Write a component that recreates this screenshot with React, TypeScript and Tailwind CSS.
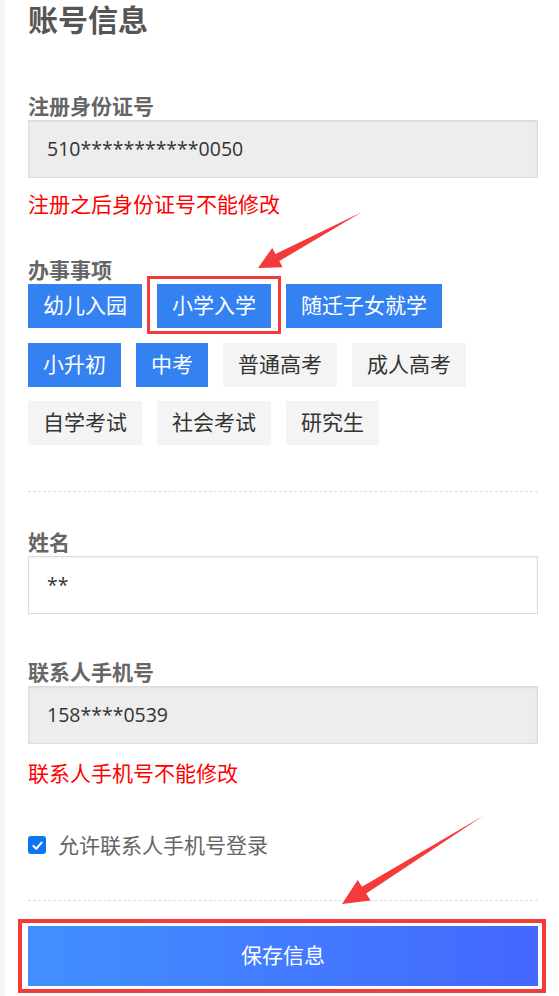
import React from "react";

const FONT = { fontFamily: '"Open Sans", "Noto Sans CJK SC", sans-serif' };

type Chip = { t: string; on: boolean; mark?: boolean };

const rows: Chip[] = [
  { t: "幼儿入园", on: true },
  { t: "小学入学", on: true, mark: true },
  { t: "随迁子女就学", on: true },
  { t: "小升初", on: true },
  { t: "中考", on: true },
  { t: "普通高考", on: false },
  { t: "成人高考", on: false },
  { t: "自学考试", on: false },
  { t: "社会考试", on: false },
  { t: "研究生", on: false },
];

function Label({ children }: { children: React.ReactNode }) {
  return <div className="text-[21px] leading-[28px] font-bold text-[#666]">{children}</div>;
}

export default function App() {
  return (
    <div className="relative w-[559px] h-[996px] overflow-hidden bg-[#f5f6fa]" style={FONT}>
      <div className="ml-[5px] h-full bg-white pl-[23px] pr-[21px]">
        <h1 className="h-[40px] text-[30px] leading-[40px] font-bold text-[#555]">账号信息</h1>

        <div className="mt-[52px]">
          <Label>注册身份证号</Label>
        </div>
        <div className="h-[58px] border border-[#dcdcdc] bg-[#ededed] shadow-[inset_0_1px_2px_rgba(0,0,0,0.08)] pl-[18px] flex items-center text-[19.5px] text-[#333]">
          510***********0050
        </div>
        <p className="mt-[12px] text-[21px] leading-[28px] text-[#ff0000]">注册之后身份证号不能修改</p>

        <div className="mt-[38px]">
          <Label>办事事项</Label>
        </div>
        <div className="flex flex-wrap gap-x-[15px] gap-y-[14.5px]">
          {rows.map((c) => (
            <div
              key={c.t}
              className={
                "relative h-[44px] px-[15px] flex items-center text-[21px] " +
                (c.on ? "bg-[#3481f2] text-white" : "bg-[#f4f4f4] text-[#333]")
              }
            >
              {c.t}
              {c.mark && (
                <span className="absolute left-[-10px] right-[-10px] top-[-8px] bottom-[-6px] border-[3px] border-[#f43a3a]" />
              )}
            </div>
          ))}
        </div>

        <div className="mt-[45.5px] border-t border-dashed border-[#dddddd]" />

        <div className="mt-[36.5px]">
          <Label>姓名</Label>
        </div>
        <div className="h-[58px] border border-[#dcdcdc] bg-white shadow-[inset_0_1px_2px_rgba(0,0,0,0.06)] pl-[18px] flex items-center text-[19.5px] text-[#333]">
          **
        </div>

        <div className="mt-[44px]">
          <Label>联系人手机号</Label>
        </div>
        <div className="h-[58px] border border-[#dcdcdc] bg-[#ededed] shadow-[inset_0_1px_2px_rgba(0,0,0,0.08)] pl-[18px] flex items-center text-[19.5px] text-[#333]">
          158****0539
        </div>
        <p className="mt-[15px] text-[21px] leading-[28px] text-[#ff0000]">联系人手机号不能修改</p>

        <div className="mt-[44px] h-[28px] flex items-center">
          <span className="w-[18px] h-[18px] rounded-[3px] bg-[#0b75f5] flex items-center justify-center">
            <svg width="13" height="13" viewBox="0 0 16 16" fill="none">
              <path d="M3 8.5 L6.5 12 L13 4.5" stroke="white" strokeWidth="2.6" strokeLinecap="round" strokeLinejoin="round" />
            </svg>
          </span>
          <span className="ml-[12px] text-[21px] leading-[28px] text-[#666]">允许联系人手机号登录</span>
        </div>

        <div className="mt-[41px] border-t border-dashed border-[#dddddd]" />

        <div className="relative mt-[25px]">
          <button className="w-full h-[60px] bg-gradient-to-r from-[#4190ff] to-[#4466ff] text-white text-[21px] flex items-center justify-center">
            保存信息
          </button>
          <span className="absolute left-[-10px] right-[-8px] top-[-7px] bottom-[-7px] border-[4px] border-[#f43a3a]" />
        </div>
      </div>

      <svg className="absolute left-0 top-0 pointer-events-none" width="559" height="996" viewBox="0 0 559 996">
        <polygon
          points="362,212 279.3,261.1 282.6,267.3 258,268 272.2,247.9 275.5,254.1"
          fill="#f43a3a"
        />
        <polygon
          points="483,816 366.2,893.6 370.5,900.4 342,904 357.7,880 362,886.8"
          fill="#f43a3a"
        />
      </svg>
    </div>
  );
}
